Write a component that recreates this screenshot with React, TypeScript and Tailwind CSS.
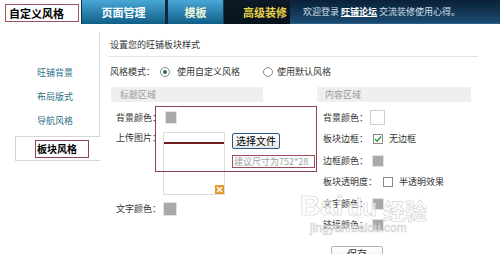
import React from 'react'

const swatch = 'bg-[#a9a9a9] border border-[#e2e2e2]'

function Radio({ checked }: { checked?: boolean }) {
  return (
    <span className="w-[10px] h-[10px] rounded-full border border-[#8a8a8a] bg-white flex items-center justify-center">
      {checked && <span className="w-[4px] h-[4px] rounded-full bg-[#2b6a5c]" />}
    </span>
  )
}

function Check({ checked }: { checked?: boolean }) {
  return (
    <span className="w-[10px] h-[10px] border border-[#8a8a8a] bg-white flex items-center justify-center">
      {checked && (
        <svg width="8" height="8" viewBox="0 0 8 8">
          <path d="M1 4 L3.2 6.2 L7 1.5" fill="none" stroke="#2e9a3a" strokeWidth="1.4" />
        </svg>
      )}
    </span>
  )
}

export default function App() {
  return (
    <div className="relative w-[500px] h-[254px] overflow-hidden bg-white text-[#333] font-['Noto_Sans_CJK_SC','Liberation_Sans',sans-serif]">
      {/* 顶部导航 */}
      <div className="flex h-[24px]">
        <div className="w-[81px] bg-white pl-[5px] pt-[4px]">
          <div className="w-[74px] h-[18px] border border-[#9a5560] pl-[3px] leading-[16px] text-[11px] font-bold text-black">
            自定义风格
          </div>
        </div>
        <div className="w-[84px] border-l border-[#0c3550] bg-gradient-to-b from-[#49a8d6] to-[#0f5e88] text-center leading-[24px] text-[11px] font-bold text-white">
          页面管理
        </div>
        <div className="w-[3px] bg-[#0b2a40]" />
        <div className="w-[55px] bg-gradient-to-b from-[#49a8d6] to-[#0f5e88] text-center leading-[24px] text-[11px] font-bold text-[#f2f6d8]">
          模板
        </div>
        <div className="w-[67px] bg-gradient-to-b from-[#0d1a26] to-[#06121c] border-l border-[#1d3a52] pl-[19px] leading-[24px] text-[11px] font-bold text-[#e8d24a]">
          高级装修
        </div>
        <div className="flex-1 bg-gradient-to-b from-[#0a2138] to-[#1b4a72] border-b border-[#2c5f88] pl-[13px] leading-[24px] text-[9px] text-[#d6e2ec] whitespace-nowrap">
          欢迎登录 <span className="font-bold text-white underline">旺铺论坛</span> 交流装修使用心得。
        </div>
      </div>

      <div className="flex">
        {/* 左侧菜单 */}
        <div className="w-[100px] shrink-0">
          <div className="mt-[8px] pt-[29px] pb-[3px] border-r border-[#dcdcdc]">
            {['旺铺背景', '布局版式', '导航风格'].map((t) => (
              <div key={t} className="h-[24px] leading-[24px] pl-[37px] text-[9px] text-[#2e6f85]">
                {t}
              </div>
            ))}
          </div>
          <div className="ml-[15px] h-[25px] border border-r-0 border-[#d6d6d6] bg-white pt-[3px] pl-[19px]">
            <div className="w-[54px] h-[18px] border border-[#8a4450] pl-[1px] leading-[16px] text-[10px] font-bold text-black">
              板块风格
            </div>
          </div>
        </div>

        {/* 主内容 */}
        <div className="flex-1 text-[9px]">
          <div className="ml-[8px] mt-[14px] w-[370px] h-[19px] border-b border-[#e3e3e3] pl-[2px] leading-[14px]">
            设置您的旺铺板块样式
          </div>

          <div className="ml-[10px] mt-[7px] h-[16px] flex items-center">
            <span>风格模式：</span>
            <span className="ml-[5px]"><Radio checked /></span>
            <span className="ml-[7px]">使用自定义风格</span>
            <span className="ml-[23px]"><Radio /></span>
            <span className="ml-[4px]">使用默认风格</span>
          </div>

          <div className="mt-[7px] flex">
            <div className="ml-[11px] w-[152px] h-[15px] bg-[#efefef] pl-[9px] leading-[15px] text-[#999]">标题区域</div>
            <div className="ml-[54px] w-[154px] h-[15px] bg-[#efefef] pl-[8px] leading-[15px] text-[#999]">内容区域</div>
          </div>

          <div className="mt-[4px] flex">
            {/* 标题区域 */}
            <div className="w-[217px] pl-[16px] pt-[4px]">
              <div className="flex items-center h-[15px]">
                <span className="w-[49px]">背景颜色：</span>
                <span className={`w-[12px] h-[13px] ${swatch}`} />
              </div>
              <div className="mt-[7px] flex items-start">
                <span className="w-[47px] leading-[12px]">上传图片：</span>
                <div className="relative w-[62px] h-[63px] border border-[#dcdcdc]">
                  <div className="mt-[9px] h-[2px] bg-[#6e1d1d]" />
                  <span className="absolute right-[0px] bottom-[0px] w-[9px] h-[9px] bg-[#e8952c] flex items-center justify-center">
                    <svg width="7" height="7" viewBox="0 0 7 7">
                      <path d="M1 1 L6 6 M6 1 L1 6" stroke="#fff" strokeWidth="1.5" />
                    </svg>
                  </span>
                </div>
                <div className="ml-[7px] mt-[1px]">
                  <div className="w-[48px] h-[16px] border border-[#2d5b8c] rounded-[2px] bg-gradient-to-b from-white to-[#e6e6e6] text-center leading-[14px] text-[10px] text-black">
                    选择文件
                  </div>
                  <div className="mt-[6px] w-[83px] h-[13px] border border-[#a04a58] pl-[1px] leading-[11px] text-[#a0a0a0] whitespace-nowrap overflow-hidden">
                    建议尺寸为752*28
                  </div>
                </div>
              </div>
              <div className="mt-[7px] flex items-center h-[14px]">
                <span className="w-[47px]">文字颜色：</span>
                <span className={`w-[14px] h-[14px] ${swatch}`} />
              </div>
            </div>

            {/* 内容区域 */}
            <div className="pl-[6px] pt-[1px]">
              <div className="flex items-center h-[21px]">
                <span>背景颜色：</span>
                <span className="ml-[2px] w-[15px] h-[15px] bg-white border border-[#cfcfcf]" />
              </div>
              <div className="flex items-center h-[22px]">
                <span>板块边框：</span>
                <span className="ml-[5px]"><Check checked /></span>
                <span className="ml-[6px]">无边框</span>
              </div>
              <div className="flex items-center h-[21px]">
                <span>边框颜色：</span>
                <span className={`ml-[4px] w-[12px] h-[12px] ${swatch}`} />
              </div>
              <div className="flex items-center h-[22px]">
                <span>板块透明度：</span>
                <span className="ml-[6px]"><Check /></span>
                <span className="ml-[6px]">半透明效果</span>
              </div>
              <div className="flex items-center h-[21px]">
                <span>文字颜色：</span>
                <span className={`ml-[4px] w-[12px] h-[12px] ${swatch}`} />
              </div>
              <div className="flex items-center h-[21px]">
                <span>链接颜色：</span>
                <span className={`ml-[4px] w-[12px] h-[12px] ${swatch}`} />
              </div>
              <div className="mt-[11px] ml-[8px] w-[52px] h-[16px] border border-[#b5b5b5] rounded-[2px] bg-gradient-to-b from-white to-[#ececec] text-center leading-[14px] text-[10px]">
                保存
              </div>
            </div>
          </div>
        </div>
      </div>

      {/* 标注框 */}
      <div className="absolute left-[155px] top-[106px] w-[162px] h-[66px] border border-[#8c4450] pointer-events-none" />

      {/* 水印 */}
      <div className="absolute left-[300px] top-[192px] pointer-events-none select-none text-white/60 [-webkit-text-stroke:0.6px_#cfcfcf]">
        <div className="flex items-end leading-none">
          <span className="text-[28px] font-bold font-['Liberation_Sans',sans-serif]">Bai</span>
          <span className="ml-[4px] text-[24px] font-bold font-['Liberation_Sans',sans-serif]">du</span>
          <span className="ml-[6px] text-[22px] font-bold">经验</span>
        </div>
        <div className="mt-[2px] pl-[10px] text-[12px] leading-none font-['Liberation_Sans',sans-serif]">jingyan.baidu.com</div>
      </div>
    </div>
  )
}
